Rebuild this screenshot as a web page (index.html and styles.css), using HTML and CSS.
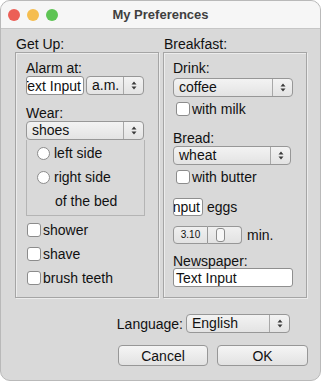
FILE: index.html
```html
<!DOCTYPE html>
<html lang="en">
<head>
  <meta charset="UTF-8">
  <title>My Preferences</title>
  <link rel="stylesheet" href="styles.css">
</head>
<body>
  <div class="window">
    <div class="titlebar">
      <div class="lights">
        <span class="light red"></span>
        <span class="light yellow"></span>
        <span class="light green"></span>
      </div>
      <div class="title">My Preferences</div>
      <div></div>
    </div>

    <div class="content">
      <div class="columns">
        <section class="group">
          <div class="group-label">Get Up:</div>
          <div class="group-box">
            <div class="field-label first">Alarm at:</div>
            <div class="row">
              <div class="text-input alarm"><span>Text Input</span></div>
              <div class="select ampm">
                <span class="select-value">a.m.</span>
                <span class="stepper"><svg width="6" height="9" viewBox="0 0 6 9"><path d="M3 0.5L5.5 3.5H0.5Z M3 8.5L5.5 5.5H0.5Z" fill="#3a3a3a"/></svg></span>
              </div>
            </div>

            <div class="field-label wear">Wear:</div>
            <div class="select">
              <span class="select-value">shoes</span>
              <span class="stepper"><svg width="6" height="9" viewBox="0 0 6 9"><path d="M3 0.5L5.5 3.5H0.5Z M3 8.5L5.5 5.5H0.5Z" fill="#3a3a3a"/></svg></span>
            </div>
            <div class="radio-box">
              <div class="radio-row"><span class="radio"></span>left side</div>
              <div class="radio-row"><span class="radio"></span>right side</div>
              <div class="radio-row note">of the bed</div>
            </div>

            <div class="checks">
              <div class="check-row"><span class="checkbox"></span>shower</div>
              <div class="check-row"><span class="checkbox"></span>shave</div>
              <div class="check-row"><span class="checkbox"></span>brush teeth</div>
            </div>
          </div>
        </section>

        <section class="group">
          <div class="group-label">Breakfast:</div>
          <div class="group-box breakfast">
            <div class="field-label first">Drink:</div>
            <div class="select drink">
              <span class="select-value">coffee</span>
              <span class="stepper"><svg width="6" height="9" viewBox="0 0 6 9"><path d="M3 0.5L5.5 3.5H0.5Z M3 8.5L5.5 5.5H0.5Z" fill="#3a3a3a"/></svg></span>
            </div>
            <div class="check-row right"><span class="checkbox"></span>with milk</div>

            <div class="field-label bread">Bread:</div>
            <div class="select">
              <span class="select-value">wheat</span>
              <span class="stepper"><svg width="6" height="9" viewBox="0 0 6 9"><path d="M3 0.5L5.5 3.5H0.5Z M3 8.5L5.5 5.5H0.5Z" fill="#3a3a3a"/></svg></span>
            </div>
            <div class="check-row right"><span class="checkbox"></span>with butter</div>

            <div class="row eggs-row">
              <div class="text-input eggs"><span>Input</span></div>
              <span>eggs</span>
            </div>

            <div class="row timer-row">
              <div class="spin-value">3.10</div>
              <div class="slider"><span class="thumb"></span></div>
              <span class="unit">min.</span>
            </div>

            <div class="field-label paper">Newspaper:</div>
            <div class="text-input paper-input"><span>Text Input</span></div>
          </div>
        </section>
      </div>

      <div class="language-row">
        <span>Language:</span>
        <div class="select language">
          <span class="select-value">English</span>
          <span class="stepper"><svg width="6" height="9" viewBox="0 0 6 9"><path d="M3 0.5L5.5 3.5H0.5Z M3 8.5L5.5 5.5H0.5Z" fill="#3a3a3a"/></svg></span>
        </div>
      </div>

      <div class="buttons">
        <button class="btn">Cancel</button>
        <button class="btn">OK</button>
      </div>
    </div>
  </div>
</body>
</html>
```

FILE: styles.css
```css
* { box-sizing: border-box; }

body {
  margin: 0;
  background: #fff;
  font-family: "Liberation Sans", Arial, sans-serif;
  font-size: 14px;
  line-height: 16px;
  color: #111;
}

.window {
  width: 321px;
  height: 381px;
  border: 1px solid #b9b9b9;
  border-radius: 10px;
  background: #d9d9d9;
  overflow: hidden;
}

/* title bar */

.titlebar {
  height: 28px;
  background: #f6f6f6;
  border-bottom: 1px solid #c6c6c6;
  display: grid;
  grid-template-columns: 1fr auto 1fr;
  align-items: center;
}

.lights {
  display: flex;
  gap: 7px;
  padding-left: 7px;
}

.light {
  width: 12px;
  height: 12px;
  border-radius: 50%;
}

.red { background: #ec5f57; }
.yellow { background: #f5bd4f; }
.green { background: #5ec454; }

.title {
  font-size: 13px;
  font-weight: bold;
  color: #404040;
}

/* main area */

.content {
  padding: 7px 0 0 14px;
}

.columns {
  display: grid;
  grid-template-columns: 144px 144px;
  column-gap: 4px;
}

.group-label {
  padding-left: 1px;
}

.group-box {
  height: 246px;
  border: 1px solid #a5a5a5;
  box-shadow: inset 1px 1px 0 #ececec, 1px 1px 0 #ececec;
  padding: 0 13px 0 10px;
}

.group-box.breakfast {
  padding: 0 12px 0 9px;
}

.field-label.first { margin-top: 7px; }
.field-label.wear { margin-top: 10px; }
.field-label.bread { margin-top: 9px; }
.field-label.paper { margin-top: 10px; line-height: 14px; }

.row {
  display: flex;
  align-items: center;
}

.drink { margin-top: 2px; }

/* text inputs */

.text-input {
  height: 19px;
  background: #fff;
  border: 1px solid #8f8f8f;
  border-radius: 3px;
  display: flex;
  align-items: center;
  overflow: hidden;
  white-space: nowrap;
  padding: 0 2px;
}

.text-input.alarm {
  width: 58px;
  justify-content: flex-end;
  margin-right: 2px;
}

.text-input.eggs {
  width: 30px;
  height: 18px;
  justify-content: flex-end;
  margin-right: 4px;
}

.text-input.paper-input {
  width: 120px;
}

/* pop-up menus */

.select {
  height: 19px;
  width: 118px;
  display: flex;
  border: 1px solid #979797;
  border-radius: 4px;
  background: linear-gradient(#f3f3f3, #e3e3e3);
}

.select.ampm { width: 58px; }
.select.drink { width: 120px; }

.select-value {
  flex: 1;
  padding-left: 5px;
  line-height: 17px;
  white-space: nowrap;
}

.stepper {
  width: 20px;
  border-left: 1px solid #a8a8a8;
  display: flex;
  align-items: center;
  justify-content: center;
}

/* radios and checkboxes */

.radio-box {
  height: 76px;
  border: 1px solid #b4b4b4;
  border-top: none;
  padding: 1px 0 0 10px;
}

.radio-row {
  height: 24px;
  display: flex;
  align-items: center;
  gap: 4px;
}

.radio-row.note {
  padding-left: 18px;
}

.radio {
  width: 13px;
  height: 13px;
  border: 1px solid #8c8c8c;
  border-radius: 50%;
  background: #fff;
}

.checks {
  margin-top: 2px;
}

.check-row {
  height: 24px;
  display: flex;
  align-items: center;
  gap: 2px;
  padding-left: 1px;
}

.check-row.right {
  padding-left: 3px;
}

.checkbox {
  width: 14px;
  height: 14px;
  border: 1px solid #8c8c8c;
  border-radius: 3px;
  background: #fff;
}

/* eggs and timer */

.eggs-row {
  margin-top: 9px;
}

.timer-row {
  margin-top: 10px;
}

.spin-value {
  width: 35px;
  height: 18px;
  border: 1px solid #979797;
  border-radius: 4px 0 0 4px;
  background: linear-gradient(#f0f0f0, #e2e2e2);
  font-size: 10px;
  line-height: 16px;
  text-align: center;
}

.slider {
  width: 34px;
  height: 18px;
  border: 1px solid #979797;
  border-left: none;
  border-radius: 0 4px 4px 0;
  background: linear-gradient(#f0f0f0, #e2e2e2);
  padding: 1px 0 0 8px;
}

.thumb {
  display: block;
  width: 9px;
  height: 14px;
  border: 1px solid #8c8c8c;
  border-radius: 3px;
  background: #f7f7f7;
}

.unit {
  margin-left: 5px;
}

/* bottom */

.language-row {
  margin-top: 16px;
  display: flex;
  justify-content: flex-end;
  align-items: center;
  gap: 3px;
  padding-right: 30px;
}

.select.language {
  width: 104px;
}

.buttons {
  margin-top: 12px;
  display: flex;
  justify-content: flex-end;
  gap: 9px;
  padding-right: 12px;
}

.btn {
  width: 90px;
  height: 21px;
  font-family: inherit;
  font-size: 14px;
  color: #111;
  border: 1px solid #979797;
  border-radius: 4px;
  background: linear-gradient(#f5f5f5, #e2e2e2);
  padding: 0;
}

.btn + .btn {
  width: 91px;
}
```
